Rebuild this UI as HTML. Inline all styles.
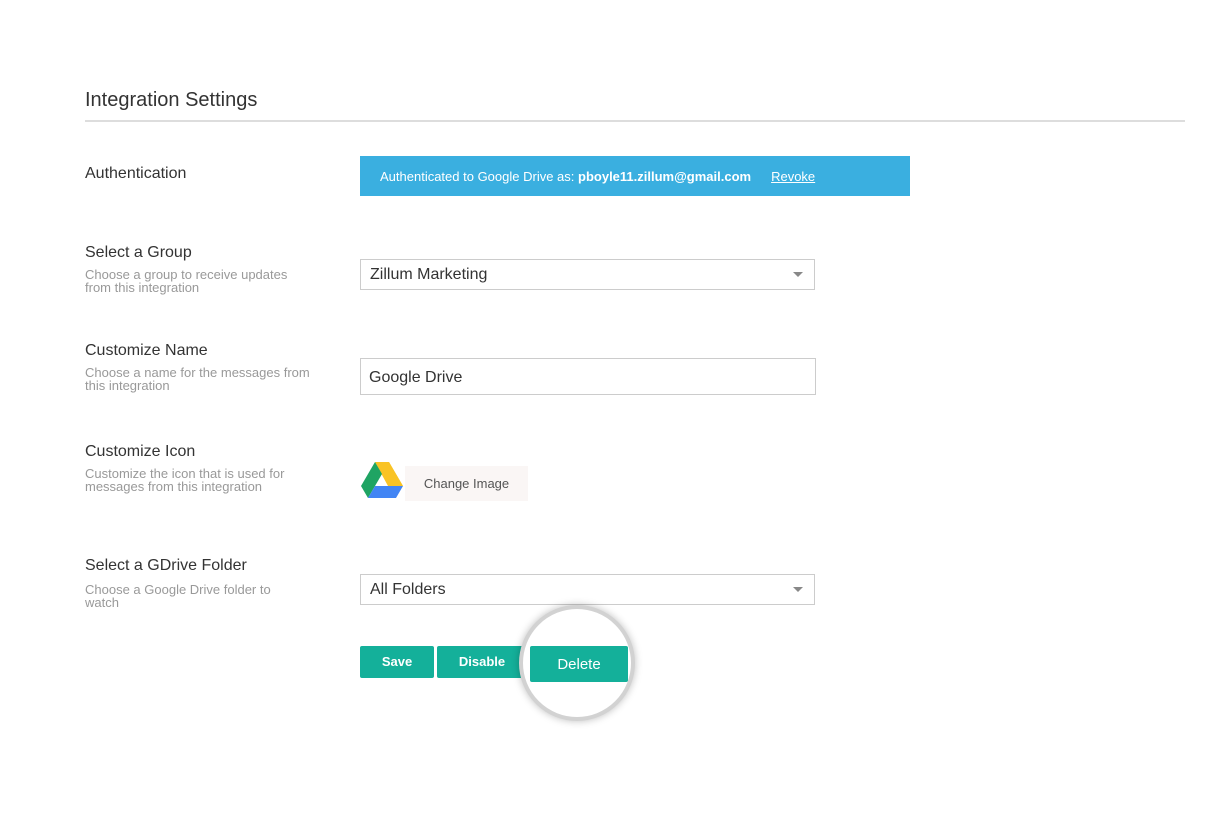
<!DOCTYPE html>
<html><head><style>
body{margin:0;width:1207px;height:832px;background:#fff;font-family:"Liberation Sans",sans-serif;position:relative;overflow:hidden;color:#333}
.a{position:absolute}
h1{position:absolute;left:85px;top:89px;margin:0;font-weight:normal;font-size:20px;color:#333}
.hr{left:85px;top:120px;width:1100px;height:2px;background:#ddd}
.lab{font-size:16px;color:#333}
.sub{font-size:13px;color:#999;line-height:13px}
.box{border:1px solid #ccc;background:#fff;font-size:16px;color:#333;box-sizing:border-box;padding-left:9px}
.caret{position:absolute;right:11px;top:12px;width:0;height:0;border-left:5px solid transparent;border-right:5px solid transparent;border-top:5px solid #888}
.btn{background:#14b09a;color:#fff;font-size:13px;font-weight:bold;text-align:center;border-radius:2px}
</style></head><body>
<h1>Integration Settings</h1>
<div class="a hr"></div>

<div class="a lab" style="left:85px;top:165px">Authentication</div>
<div class="a" style="left:360px;top:156px;width:550px;height:40px;background:#3aafe0;color:#fff;font-size:13px;line-height:41px"><span style="margin-left:20px">Authenticated to Google Drive as: <b>pboyle11.zillum@gmail.com</b></span><span style="margin-left:20px;text-decoration:underline">Revoke</span></div>

<div class="a lab" style="left:85px;top:244px">Select a Group</div>
<div class="a sub" style="left:85px;top:268px">Choose a group to receive updates<br>from this integration</div>
<div class="a box" style="left:360px;top:259px;width:455px;height:31px;line-height:30px">Zillum Marketing<div class="caret"></div></div>

<div class="a lab" style="left:85px;top:342px">Customize Name</div>
<div class="a sub" style="left:85px;top:366px">Choose a name for the messages from<br>this integration</div>
<div class="a box" style="left:360px;top:358px;width:456px;height:37px;line-height:37px;padding-left:8px">Google Drive</div>

<div class="a lab" style="left:85px;top:443px">Customize Icon</div>
<div class="a sub" style="left:85px;top:467px">Customize the icon that is used for<br>messages from this integration</div>
<svg class="a" style="left:361px;top:462px" width="42" height="36" viewBox="0 0 42 36">
<polygon points="14,0 28,0 42,24 35,24 27,24" fill="#f9c325"/>
<polygon points="28,0 42,24 28,24 21,12" fill="#f9c325"/>
<polygon points="14,0 21,12 7,36 0,24" fill="#1fa463"/>
<polygon points="14,24 42,24 35,36 7,36" fill="#4285f4"/>
</svg>
<div class="a" style="left:405px;top:466px;width:123px;height:35px;background:#faf6f5;color:#555;font-size:13px;line-height:35px;text-align:center">Change Image</div>

<div class="a lab" style="left:85px;top:557px">Select a GDrive Folder</div>
<div class="a sub" style="left:85px;top:583px">Choose a Google Drive folder to<br>watch</div>
<div class="a box" style="left:360px;top:574px;width:455px;height:31px;line-height:30px">All Folders<div class="caret"></div></div>

<div class="a btn" style="left:360px;top:646px;width:74px;height:32px;line-height:32px">Save</div>
<div class="a btn" style="left:437px;top:646px;width:90px;height:32px;line-height:32px">Disable</div>
<div class="a" style="left:519px;top:605px;width:116px;height:116px;border-radius:50%;background:#fff;border:4px solid #d2d2d2;box-shadow:0 0 8px rgba(0,0,0,.25);box-sizing:border-box"></div>
<div class="a btn" style="left:530px;top:646px;width:98px;height:36px;line-height:37px;font-size:15px;font-weight:normal">Delete</div>
</body></html>
